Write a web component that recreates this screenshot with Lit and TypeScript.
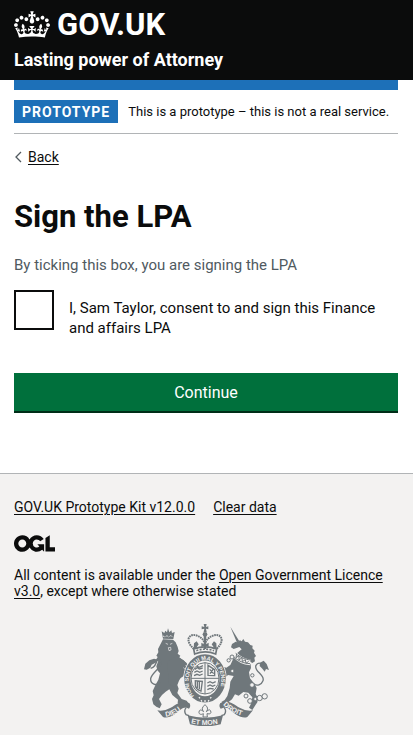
import { LitElement, html, css, svg } from "lit";
import { customElement, state } from "lit/decorators.js";

const crown = svg`<path fill="currentColor" fill-rule="evenodd" d="M25 30.2c3.5 1.5 7.7-.2 9.1-3.7 1.5-3.6-.2-7.8-3.9-9.2-3.6-1.4-7.6.3-9.1 3.9-1.4 3.5.3 7.5 3.9 9zM9 39.5c3.6 1.5 7.8-.2 9.2-3.7 1.5-3.6-.2-7.8-3.9-9.1-3.6-1.5-7.6.2-9.1 3.8-1.4 3.5.3 7.5 3.8 9zM4.4 57.2c3.5 1.5 7.7-.2 9.1-3.8 1.5-3.6-.2-7.7-3.9-9.1-3.5-1.5-7.6.3-9.1 3.8-1.4 3.5.3 7.6 3.9 9.1zm38.3-21.4c3.5 1.5 7.7-.2 9.1-3.8 1.5-3.6-.2-7.7-3.9-9.1-3.6-1.5-7.6.3-9.1 3.8-1.3 3.6.4 7.7 3.9 9.1zm64.4-5.6c-3.6 1.5-7.8-.2-9.1-3.7-1.5-3.6.2-7.8 3.8-9.2 3.6-1.4 7.7.3 9.2 3.9 1.3 3.5-.4 7.5-3.9 9zm15.9 9.3c-3.6 1.5-7.7-.2-9.1-3.7-1.5-3.6.2-7.8 3.7-9.1 3.6-1.5 7.7.2 9.2 3.8 1.5 3.5-.3 7.5-3.8 9zm4.7 17.7c-3.6 1.5-7.8-.2-9.2-3.8-1.5-3.6.2-7.7 3.9-9.1 3.6-1.5 7.7.3 9.2 3.8 1.3 3.5-.4 7.6-3.9 9.1zM89.3 35.8c-3.6 1.5-7.8-.2-9.2-3.8-1.4-3.6.2-7.7 3.9-9.1 3.6-1.5 7.7.3 9.2 3.8 1.4 3.6-.3 7.7-3.9 9.1zM69.7 17.7l8.9 4.7V9.3l-8.9 2.8c-.2-.3-.5-.6-.9-.9L72.4 0H59.6l3.5 11.2c-.3.3-.6.5-.9.9l-8.8-2.8v13.1l8.8-4.7c.3.3.6.7.9.9l-5 15.4v.1c-.2.8-.4 1.6-.4 2.4 0 4.1 3.1 7.5 7 8.1h.2c.3 0 .7.1 1 .1.4 0 .7 0 1-.1h.2c4-.6 7.1-4.1 7.1-8.1 0-.8-.1-1.7-.4-2.4V34l-5.1-15.4c.4-.2.7-.6 1-.9zM66 92.8c16.9 0 32.8 1.1 47.1 3.2 4-16.9 8.9-26.7 14-33.5l-9.6-3.4c1 4.9 1.1 7.2 0 10.2-1.5-1.4-3-4.3-4.2-8.7L108.6 76c2.8-2 5-3.2 7.5-3.3-4.4 9.4-10 11.9-13.6 11.2-4.3-.8-6.3-4.6-5.6-7.9 1-4.7 5.7-5.9 8-.5 4.3-8.7-3-11.4-7.6-8.8 7.1-7.2 7.9-13.5 2.1-21.1-8 6.1-8.1 12.3-4.5 20.8-4.7-5.4-12.1-2.5-9.5 6.2 3.4-5.2 7.9-2 7.2 3.1-.6 4.3-6.4 7.8-13.5 7.2-10.3-.9-10.9-8-11.2-13.8 2.5-.5 7.1 1.8 11 7.3L80.2 60c-4.1 4.4-8 5.3-12.3 5.4 1.4-4.4 8-11.6 8-11.6H55.5s6.4 7.2 7.9 11.6c-4.2-.1-8-1-12.3-5.4l1.4 16.4c3.9-5.5 8.5-7.7 10.9-7.3-.3 5.8-.9 12.8-11.1 13.8-7.2.6-12.9-2.9-13.5-7.2-.7-5 3.8-8.3 7.1-3.1 2.7-8.7-4.6-11.6-9.4-6.2 3.7-8.5 3.6-14.7-4.6-20.8-5.8 7.6-5 13.9 2.2 21.1-4.7-2.6-11.9.1-7.7 8.8 2.3-5.5 7.1-4.2 8.1.5.7 3.3-1.3 7.1-5.7 7.9-3.5.7-9-1.8-13.5-11.2 2.5.1 4.7 1.3 7.5 3.3l-4.7-15.4c-1.2 4.4-2.7 7.2-4.3 8.7-1.1-3-.9-5.3 0-10.2l-9.5 3.4c5 6.9 9.9 16.7 14 33.5 14.8-2.1 30.8-3.2 47.7-3.2z"/>`;

const ogl = svg`<path fill="currentColor" d="M421.5 142.8V.1l-50.7 32.3v161.1h112.4v-50.7zm-122.3-9.6A47.12 47.12 0 0 1 221 97.8c0-26 21.1-47.1 47.1-47.1 16.7 0 31.4 8.7 39.7 21.8l42.7-27.2A97.63 97.63 0 0 0 268.1 0c-36.5 0-68.3 20.1-85.1 49.7A98 98 0 0 0 97.8 0C43.9 0 0 43.9 0 97.8s43.9 97.8 97.8 97.8c36.5 0 68.3-20.1 85.1-49.7a97.76 97.76 0 0 0 149.6 25.4l19.4 22.2h3v-87.8h-80l24.3 27.5zM97.8 145c-26 0-47.1-21.1-47.1-47.1s21.1-47.1 47.1-47.1 47.1 21.1 47.1 47.1S123.8 145 97.8 145"/>`;

/* Supporters, garter, crown and motto scroll of the Royal Arms. */
const arms = svg`
  <g fill="currentColor">
    <path d="M77 49l8 5 3-7 5 5 3-12 4 12 6-6 2 8 8-3-4 21-31-1z"/>
    <path d="M81 73l30 1 8 8 6 14 3 12-3 8 8 6-4 6 14 8 9 10 2 10-7 12-5 16-8 4-5 9-5 13 4 11-4 13 13 18 15 5 5 7-2 8-10-2-9 2-11-8 1-10-17-14-9-17-11 7-11 10-9 12 8 16-6 12-10-5-9-7-4-16 5-11-3-13 8-17 9-17 5-19-8-9-3-12 6-17-8-1 6-10-4-4 6-10-1-10z"/>
    <path d="M124 122l28 22 4 12-12 8-4 20-14 12-10 20-18-8-4-70z"/>
    <path d="M24 163l4-17 12-10 14-5 13 3-8 9-12 6-4 9-11 6z"/>
  </g>
  <path d="M44 160c12-2 15-12 19-23 5-5 13-1 11 10-2 14-28 29-30 44-1 16 17 23 29 12" fill="none" stroke="currentColor" stroke-width="4"/>
  <path d="M81 63l6 3 6-4 5 4 6-4 6 3" fill="none" stroke="#f3f2f1" stroke-width="3" stroke-dasharray="3 2"/>
  <path d="M89 85l7 3m6 0l7-3M97 98l7-1 1 8-6 2zM142 158l12 11m-5-18l10 12" fill="none" stroke="#f3f2f1" stroke-width="2"/>

  <g fill="currentColor">
    <path d="M283 35l27 44-7 4z"/>
    <path d="M303 82l9-6 5 3 5-7 5 8 9 2 7 8 7 2-1 8 7 7-2 6 6 10-5 5 2 11-8 5-48-28 16-13-7-7-17 6-8-5 3-10 11-7z"/>
    <path d="M296 122l48 25 1 12-6 13 3 18 13 16 7 13-3 18 7 13-2 12-6 9-9 14-10-7 6-12 4-19-12-14-15-2-14 11-11-4-9 15-13 10-15 4-4-6 10-6 8-12 7-24 2-19 10-17-17-3-10 9-14-5-1-11 11-3-19-7-4-13 3-10 9 3 4 10 16 5 12-8z"/>
    <path d="M371 153l1-10 11-6 9 10 7 18-9-3-4 8-7-9z"/>
  </g>
  <path d="M384 160c0-13-17-22-24-9-8 18 28 28 21 46-5 13-18 17-28 9" fill="none" stroke="currentColor" stroke-width="4"/>
  <path d="M296 118c14 17 29 23 47 24" fill="none" stroke="#f3f2f1" stroke-width="17"/>
  <path d="M299 115c14 13 29 18 45 20M295 127c15 13 30 18 47 19M302 116l-2 12 9-6 0 13 9-7 1 12 9-6 2 11 8-6" fill="none" stroke="currentColor" stroke-width="3"/>
  <g fill="#f3f2f1" stroke="currentColor" stroke-width="3">
    <circle cx="288" cy="126" r="6"/><circle cx="278" cy="136" r="5"/><circle cx="289" cy="168" r="5"/>
    <circle cx="349" cy="181" r="5"/><circle cx="348" cy="210" r="7"/><circle cx="330" cy="243" r="6"/>
    <circle cx="342" cy="258" r="7"/><circle cx="358" cy="252" r="5"/><circle cx="371" cy="249" r="8"/><circle cx="386" cy="244" r="8"/>
  </g>

  <ellipse cx="207" cy="190" rx="65" ry="75" fill="#f3f2f1"/>
  <ellipse cx="207" cy="190" rx="53" ry="63" fill="none" stroke="currentColor" stroke-width="19"/>
  <ellipse cx="207" cy="190" rx="42" ry="47" fill="#f3f2f1" stroke="currentColor" stroke-width="3"/>
  <path d="M207 143v94M165 190h84" stroke="currentColor" stroke-width="3"/>
  <g fill="none" stroke="currentColor" stroke-width="4">
    <path d="M176 163l8-5 6 4 10-3M175 172l8-4 8 4 9-4M174 182l9-4 8 3 9-4M182 153l8 4 11-5"/>
    <path d="M216 181v-30l20 13v18zM221 163l12 13M222 176l10-14"/>
    <path d="M178 197v16c2 8 8 12 17 15l4-29zM184 199v20M190 199v23"/>
    <path d="M214 204l8-4 8 4 9-4M214 214l8-4 8 4 8-4M214 224l8-4 11 2"/>
  </g>
  <defs>
    <path id="garter" d="M174 243C148 217 150 145 207 134C264 145 266 217 240 243"/>
    <path id="dieu" d="M89 305C112 303 127 292 149 273"/>
    <path id="droit" d="M261 269C279 287 298 298 327 304"/>
    <path id="mon" d="M165 325Q207 335 252 325"/>
  </defs>
  <g fill="#f3f2f1" font-family="Liberation Sans, sans-serif" font-weight="700">
    <text font-size="17"><textPath href="#garter">HONI SOIT QUI MAL Y PENSE</textPath></text>
  </g>
  <path d="M189 246l8 12h20l9-12" fill="none" stroke="#f3f2f1" stroke-width="4" stroke-dasharray="5 6"/>

  <path d="M175 107c-35-32-13-55 9-45 14 5 21 13 23 26 2-13 9-21 23-26 24-10 46 13 10 45z" fill="#f3f2f1"/>
  <g fill="none" stroke="currentColor">
    <path d="M174 102c-31-27-13-49 9-40 16 7 23 14 24 31 1-17 8-24 24-31 22-9 40 13 10 40" stroke-width="6" stroke-dasharray="5 2"/>
    <path d="M173 102q34-13 69 0l-3 15q-31-13-63 0z" stroke-width="5"/>
    <path d="M181 107q26-9 53 0" stroke-width="5" stroke-dasharray="6 4"/>
  </g>
  <g fill="currentColor">
    <path d="M203 27h9l-2 9 7-2v9l-7-2 2 10h-9l2-10-8 2v-9l8 2z"/>
    <circle cx="207" cy="58" r="7"/>
    <path d="M203 62h8l-1 26 8-5v13l-8-3v9h-6v-9l-8 3V83l8 5zM174 85l8-6 6 9-6 9 4 5h-13zM227 88l7-9 7 6 1 17h-13l4-5z"/>
  </g>

  <path d="M64 286q19 4 40-8c18-10 27-19 40-17l16 3q6 9-1 17l-7-3c-12-2-22 10-36 20q-22 14-35 8z" fill="currentColor"/>
  <path d="M351 286q-19 4-40-8c-18-10-27-19-40-17l-18 3q-6 9 1 17l9-3c12-2 22 10 36 20q22 14 35 8z" fill="currentColor"/>
  <path d="M151 277q-9 10-1 22l9 3M264 277q9 10 1 22l-9 3" fill="none" stroke="currentColor" stroke-width="4"/>
  <path d="M155 301q52 14 106 0l-7 27q-46 12-92 0z" fill="currentColor"/>
  <path d="M207 269q13 10 4 21 12-12 14 2-2 8-12 4l1 10h-13l1-10c-9 5-14 0-13-5 2-13 13-1 14-1q-10-10 4-21z" fill="none" stroke="currentColor" stroke-width="3"/>
  <g fill="#f3f2f1" font-family="Liberation Sans, sans-serif" font-weight="700" font-size="21">
    <text><textPath href="#dieu">DIEU</textPath></text>
    <text><textPath href="#droit">DROIT</textPath></text>
    <text><textPath href="#mon">ET MON</textPath></text>
  </g>`;

@customElement("app-root")
export class AppRoot extends LitElement {
  @state() private agreed = false;

  static styles = css`
    :host {
      display: block;
      min-height: 100vh;
      background: #f3f2f1;
      color: #0b0c0c;
      font-family: Roboto, "Open Sans", sans-serif;
      font-size: 15px;
      line-height: 20px;
    }
    * { box-sizing: border-box; }
    a { color: inherit; text-underline-offset: 2px; text-decoration-thickness: 1px; }
    .container { margin: 0 15px 0 14px; }
    .top { background: #0b0c0c; color: #fff; }
    .top .container { display: flex; flex-direction: column; align-items: flex-start; padding: 9px 0 5px; gap: 4px; }
    .top a { text-decoration: none; }
    .brand { display: flex; align-items: flex-start; gap: 7px; font-size: 31px; line-height: 32px; font-weight: 700; }
    .crown { width: 36px; height: 27px; margin-top: 2px; }
    .service { font-size: 18px; line-height: 30px; font-weight: 700; }
    .page { background: #fff; border-bottom: 1px solid #b1b4b6; padding-bottom: 60px; }
    .bar { height: 10px; background: #1d70b8; }
    .phase { display: flex; align-items: center; gap: 10px; padding: 10px 0; border-bottom: 1px solid #b1b4b6; font-size: 13px; }
    .tag { background: #1d70b8; color: #fff; font-size: 14px; font-weight: 700; letter-spacing: 1px; padding: 1px 8px 0; line-height: 22px; flex: none; }
    .back { display: flex; width: fit-content; align-items: center; gap: 5px; margin-top: 13px; font-size: 14px; }
    .chevron { width: 9px; height: 12px; }
    h1 { margin: 30px 0 18px; font-size: 31px; line-height: 40px; font-weight: 700; }
    .hint { margin: 0 0 15px; color: #505a5f; }
    .choice { display: flex; gap: 15px; align-items: flex-start; }
    .box { appearance: none; flex: none; width: 40px; height: 40px; margin: 0; border: 2px solid #0b0c0c; background: #fff; display: grid; place-items: center; }
    .box:checked::after { content: ""; width: 20px; height: 9px; border: solid #0b0c0c; border-width: 0 0 4px 4px; rotate: -45deg; }
    .choice label { padding-top: 8px; }
    .go { display: block; width: 100%; height: 38px; margin-top: 35px; margin-bottom: 2px; padding: 2px 0 0; border: 0; background: #00703c; box-shadow: 0 2px 0 #002d18; color: #fff; font: inherit; font-size: 16px; }
    .foot { font-size: 14px; line-height: 16px; padding: 24px 0 10px; }
    .links { display: flex; flex-wrap: wrap; gap: 18px; margin: 0 0 19px; padding: 0; list-style: none; line-height: 18px; }
    .ogl { display: block; width: 41px; height: 17px; margin-bottom: 15px; }
    .licence { margin: 0 0 25px; }
    .arms { display: block; width: 125px; margin: 0 auto; color: #6f777b; }
    .arms svg { display: block; width: 100%; }
  `;

  render() {
    return html`
      <header class="top">
        <div class="container">
          <a class="brand" href="#home">
            <svg class="crown" viewBox="0 0 132 97" aria-hidden="true">${crown}</svg>
            <span>GOV.UK</span>
          </a>
          <a class="service" href="#service">Lasting power of Attorney</a>
        </div>
      </header>
      <div class="page">
        <div class="container">
          <div class="bar"></div>
          <div class="phase">
            <strong class="tag">PROTOTYPE</strong>
            <span>This is a prototype – this is not a real service.</span>
          </div>
          <a class="back" href="#back">
            <svg class="chevron" viewBox="0 0 9 12" aria-hidden="true"><path d="M7 1L2 6l5 5" fill="none" stroke="#505a5f" stroke-width="1.3"/></svg>
            Back
          </a>
          <main>
            <h1>Sign the LPA</h1>
            <form @submit=${(e: Event) => e.preventDefault()}>
              <p class="hint" id="hint">By ticking this box, you are signing the LPA</p>
              <div class="choice">
                <input class="box" id="agree" type="checkbox" aria-describedby="hint" .checked=${this.agreed}
                  @change=${(e: Event) => { this.agreed = (e.target as HTMLInputElement).checked; }} />
                <label for="agree">I, Sam Taylor, consent to and sign this Finance and affairs LPA</label>
              </div>
              <button class="go" type="submit">Continue</button>
            </form>
          </main>
        </div>
      </div>
      <footer class="foot">
        <div class="container">
          <ul class="links">
            <li><a href="#kit">GOV.UK Prototype Kit v12.0.0</a></li>
            <li><a href="#clear">Clear data</a></li>
          </ul>
          <svg class="ogl" viewBox="0 0 483.2 195.7" role="img" aria-label="OGL">${ogl}</svg>
          <p class="licence">All content is available under the <a href="#licence">Open Government Licence v3.0</a>, except where otherwise stated</p>
          <a class="arms" href="#copyright" aria-label="Crown copyright">
            <svg viewBox="24 27 375 306" aria-hidden="true">${arms}</svg>
          </a>
        </div>
      </footer>
    `;
  }
}
